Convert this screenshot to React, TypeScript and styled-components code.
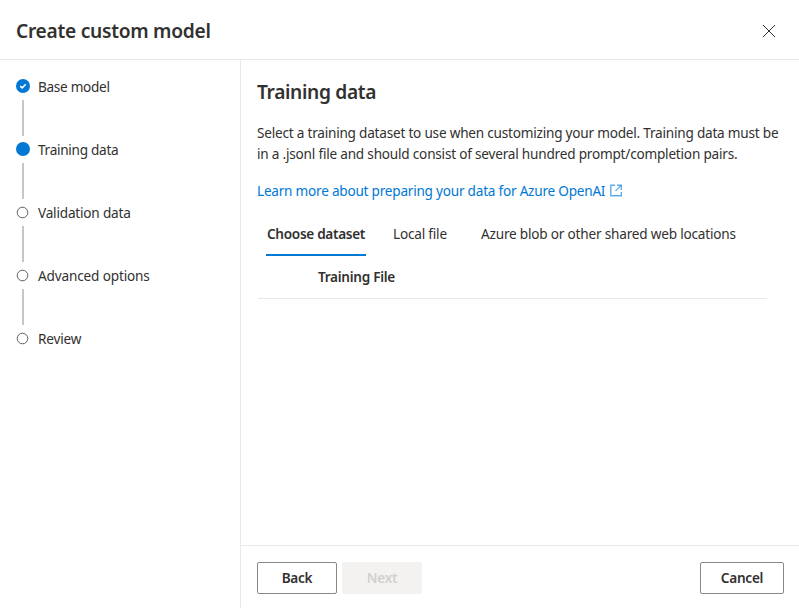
import React from "react";
import styled, { createGlobalStyle, css } from "styled-components";

const GlobalStyle = createGlobalStyle`
  * { box-sizing: border-box; }
  body {
    margin: 0;
    background: #fff;
    color: #323130;
    font-family: "Noto Sans", "Open Sans", sans-serif;
    font-size: 13.6px;
    letter-spacing: -0.2px;
    overflow: hidden;
  }
`;

const Panel = styled.div`
  display: flex;
  flex-direction: column;
  width: 799px;
  height: 608px;
  background: #fff;
`;

const Header = styled.header`
  display: flex;
  align-items: center;
  justify-content: space-between;
  height: 60px;
  padding: 2px 23px 0 16px;
  border-bottom: 1px solid #eae9e8;
`;

const Title = styled.h1`
  margin: 0;
  font-size: 19.2px;
  line-height: 28px;
  font-weight: 570;
  letter-spacing: -0.28px;
  white-space: nowrap;
`;

const IconButton = styled.button`
  display: flex;
  padding: 0;
  border: 0;
  background: none;
  color: #323130;
`;

const Body = styled.div`
  display: flex;
  flex: 1;
  min-height: 0;
`;

const Steps = styled.ol`
  flex: 0 0 241px;
  margin: 0;
  padding: 19px 0 0 16px;
  list-style: none;
  border-right: 1px solid #eae9e8;
`;

const Step = styled.li`
  display: grid;
  grid-template-columns: 14px 1fr;
  grid-template-rows: 14px 36px;
  column-gap: 8px;
  row-gap: 7px;
  height: 63px;
`;

const StepLabel = styled.span<{ $track: number }>`
  line-height: 16px;
  white-space: nowrap;
  letter-spacing: ${(p) => p.$track}px;
`;

const Connector = styled.span`
  width: 2px;
  height: 36px;
  margin-left: 6px;
  background: #c8c6c4;
`;

const Main = styled.main`
  display: flex;
  flex: 1;
  flex-direction: column;
  min-width: 0;
`;

const Content = styled.section`
  flex: 1;
  padding: 18px 16px 0;
`;

const Heading = styled.h2`
  margin: 0 0 16px;
  font-size: 19.2px;
  line-height: 28px;
  font-weight: 570;
  letter-spacing: -0.36px;
  white-space: nowrap;
`;

const Line = styled.span<{ $track: number }>`
  display: block;
  letter-spacing: ${(p) => p.$track}px;
`;

const Paragraph = styled.p`
  margin: 0 0 16px;
  line-height: 21px;
  white-space: nowrap;
`;

const Link = styled.a`
  display: flex;
  align-items: center;
  gap: 5px;
  height: 21px;
  color: #0078d4;
  text-decoration: none;
  white-space: nowrap;
`;

const Tabs = styled.div`
  display: flex;
  height: 44px;
  margin-top: 11px;
  padding-left: 9px;
`;

const Tab = styled.button<{ $width: number; $track: number; $active?: boolean }>`
  width: ${(p) => p.$width}px;
  margin: 0 26px 0 0;
  padding: 1px 0 0 1px;
  border: 0;
  border-bottom: 2px solid transparent;
  background: none;
  color: inherit;
  font: inherit;
  line-height: 42px;
  text-align: left;
  white-space: nowrap;
  letter-spacing: ${(p) => p.$track}px;
  ${(p) =>
    p.$active &&
    css`
      font-weight: 580;
      border-bottom-color: #0078d4;
    `}
`;

const TableHeader = styled.div`
  width: 509px;
  height: 43px;
  margin-left: 1px;
  padding-left: 60px;
  border-bottom: 1px solid #eae9e8;
  font-weight: 580;
  letter-spacing: -0.28px;
  line-height: 41px;
`;

const Footer = styled.footer`
  display: flex;
  gap: 5px;
  height: 63px;
  padding: 16px 15px 0 16px;
  border-top: 1px solid #eae9e8;
`;

const Button = styled.button<{ $width?: number }>`
  width: ${(p) => p.$width ?? 80}px;
  height: 32px;
  padding: 0 0 2px;
  border: 1px solid #8a8886;
  border-radius: 2px;
  background: #fff;
  color: #323130;
  font: inherit;
  font-weight: 580;
  letter-spacing: -0.25px;
  &:last-child {
    margin-left: auto;
  }
  &:disabled {
    border-color: #f3f2f1;
    background: #f3f2f1;
    color: #d2d0ce;
  }
`;

type Status = "done" | "current" | "todo";

const StepIcon = ({ status }: { status: Status }) => (
  <svg width="14" height="14" viewBox="0 0 14 14" fill="none">
    {status === "todo" ? (
      <circle cx="6.5" cy="7.5" r="5.3" stroke="#605e5c" />
    ) : (
      <circle cx="7" cy="7" r="7" fill="#0078d4" />
    )}
    {status === "done" && (
      <path d="M4.2 7.1 6.2 8.9 9.8 5.3" stroke="#fff" strokeWidth="1.5" />
    )}
  </svg>
);

const CloseIcon = () => (
  <svg width="14" height="14" viewBox="0 0 14 14" fill="none">
    <path d="M1 1 13 13M13 1 1 13" stroke="#323130" />
  </svg>
);

const ExternalIcon = () => (
  <svg width="12" height="14" viewBox="0 0 12 14" fill="none">
    <path
      d="M5 1.2H.8V11.7H11.3V8M7 1.2H11.3V6"
      stroke="#5faee6"
      strokeWidth="1.4"
    />
    <path d="M11 1.5 5.5 7" stroke="#0078d4" />
  </svg>
);

const steps: { label: string; status: Status; track: number }[] = [
  { label: "Base model", status: "done", track: -0.3 },
  { label: "Training data", status: "current", track: -0.28 },
  { label: "Validation data", status: "todo", track: -0.2 },
  { label: "Advanced options", status: "todo", track: -0.16 },
  { label: "Review", status: "todo", track: -0.2 },
];

export default function App() {
  return (
    <>
      <GlobalStyle />
      <Panel>
        <Header>
          <Title>Create custom model</Title>
          <IconButton aria-label="Close">
            <CloseIcon />
          </IconButton>
        </Header>
        <Body>
          <Steps>
            {steps.map((s, i) => (
              <Step key={s.label}>
                <StepIcon status={s.status} />
                <StepLabel $track={s.track}>{s.label}</StepLabel>
                {i < steps.length - 1 && <Connector />}
              </Step>
            ))}
          </Steps>
          <Main>
            <Content>
              <Heading>Training data</Heading>
              <Paragraph>
                <Line $track={-0.22}>
                  Select a training dataset to use when customizing your model. Training data must be
                </Line>
                <Line $track={-0.21}>
                  in a .jsonl file and should consist of several hundred prompt/completion pairs.
                </Line>
              </Paragraph>
              <Link>
                <Line $track={-0.23}>Learn more about preparing your data for Azure OpenAI</Line>
                <ExternalIcon />
              </Link>
              <Tabs>
                <Tab $width={100} $track={-0.31} $active>
                  Choose dataset
                </Tab>
                <Tab $width={62} $track={-0.2}>
                  Local file
                </Tab>
                <Tab $width={260} $track={-0.2}>
                  Azure blob or other shared web locations
                </Tab>
              </Tabs>
              <TableHeader>Training File</TableHeader>
            </Content>
            <Footer>
              <Button>Back</Button>
              <Button disabled>Next</Button>
              <Button $width={84}>Cancel</Button>
            </Footer>
          </Main>
        </Body>
      </Panel>
    </>
  );
}
